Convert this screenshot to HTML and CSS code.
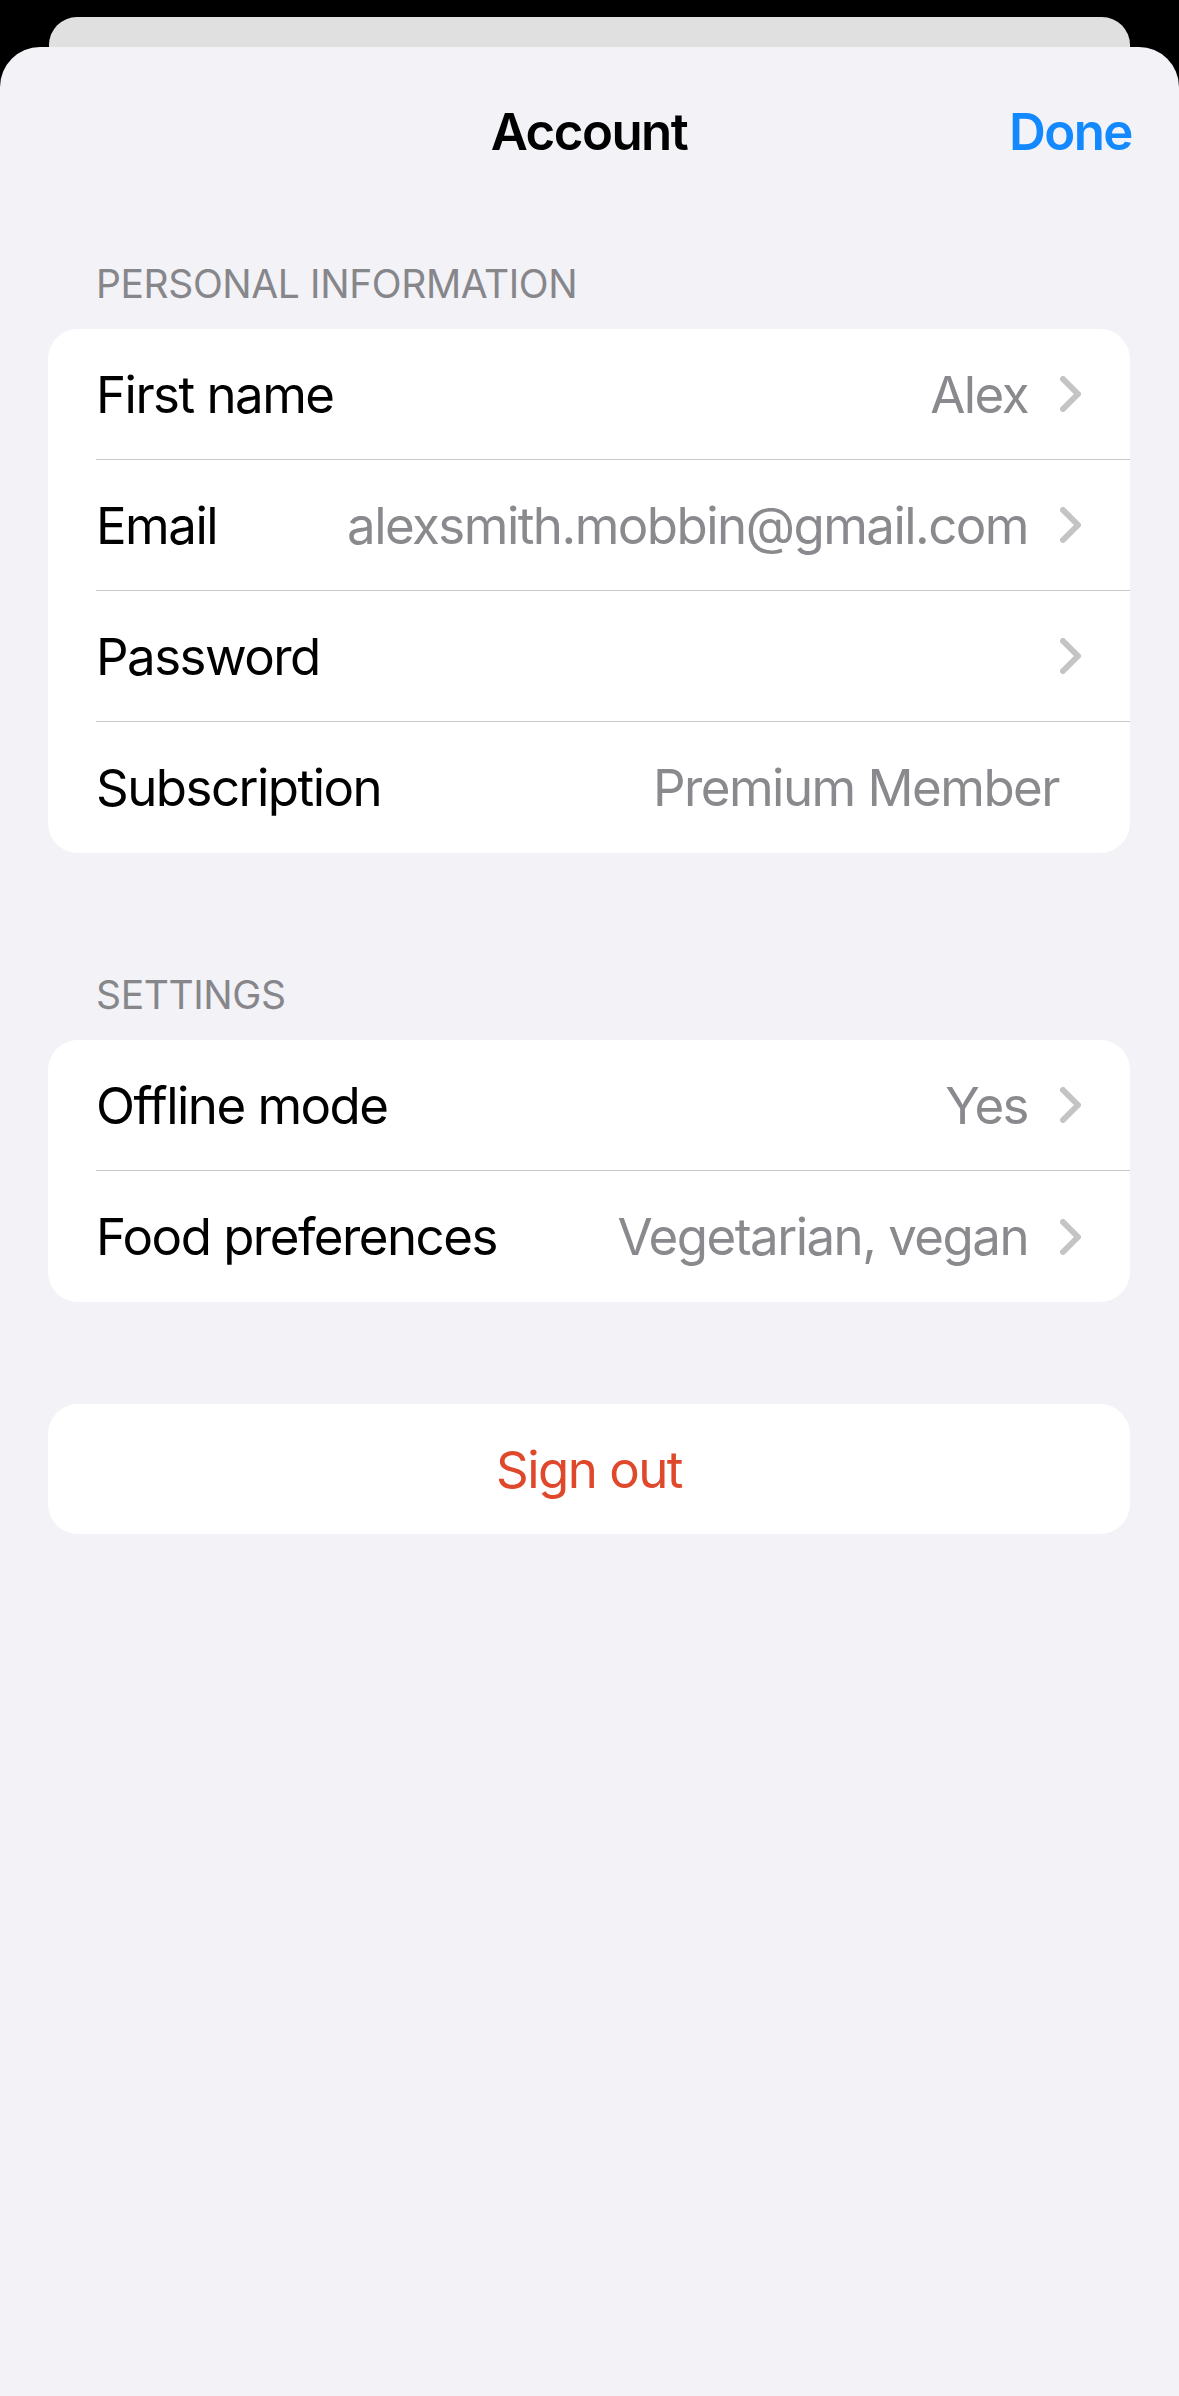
FILE: index.html
```html
<!DOCTYPE html>
<html lang="en">
<head>
  <meta charset="UTF-8">
  <meta name="viewport" content="width=device-width, initial-scale=1.0">
  <title>Account</title>
  <link rel="stylesheet" href="styles.css">
</head>
<body>
  <div class="backdrop">
    <div class="back-card"></div>
  </div>

  <div class="sheet">
    <div class="nav">
      <h1 class="nav-title">Account</h1>
      <button class="nav-done">Done</button>
    </div>

    <div class="section-header first">Personal information</div>
    <div class="card">
      <div class="row">
        <div class="row-body">
          <span class="label">First name</span>
          <span class="value">Alex</span>
          <svg class="chevron" viewBox="0 0 21 36"><path d="M3 3 L18 18 L3 33"/></svg>
        </div>
      </div>
      <div class="row">
        <div class="row-body">
          <span class="label">Email</span>
          <span class="value">alexsmith.mobbin@gmail.com</span>
          <svg class="chevron" viewBox="0 0 21 36"><path d="M3 3 L18 18 L3 33"/></svg>
        </div>
      </div>
      <div class="row">
        <div class="row-body">
          <span class="label">Password</span>
          <span class="value"></span>
          <svg class="chevron" viewBox="0 0 21 36"><path d="M3 3 L18 18 L3 33"/></svg>
        </div>
      </div>
      <div class="row">
        <div class="row-body">
          <span class="label">Subscription</span>
          <span class="value plain">Premium Member</span>
        </div>
      </div>
    </div>

    <div class="section-header">Settings</div>
    <div class="card">
      <div class="row">
        <div class="row-body">
          <span class="label">Offline mode</span>
          <span class="value">Yes</span>
          <svg class="chevron" viewBox="0 0 21 36"><path d="M3 3 L18 18 L3 33"/></svg>
        </div>
      </div>
      <div class="row">
        <div class="row-body">
          <span class="label">Food preferences</span>
          <span class="value">Vegetarian, vegan</span>
          <svg class="chevron" viewBox="0 0 21 36"><path d="M3 3 L18 18 L3 33"/></svg>
        </div>
      </div>
    </div>

    <div class="card sign-out">
      <button class="sign-out-btn">Sign out</button>
    </div>
  </div>
</body>
</html>
```

FILE: styles.css
```css
body {
  margin: 0;
  background: #000;
  font-family: 'Inter', 'Liberation Sans', sans-serif;
  -webkit-font-smoothing: antialiased;
}
.backdrop {
  padding-top: 17px;
  height: 30px;
}
.back-card {
  margin: 0 49px 0 49px;
  height: 30px;
  background: #e0e0e0;
  border-radius: 28px 28px 0 0;
}
.sheet {
  background: #f2f2f7;
  border-radius: 40px 40px 0 0;
  min-height: 2349px;
  padding: 0 49px 0 48px;
}
.nav {
  height: 168px;
  display: flex;
  align-items: center;
  justify-content: center;
  position: relative;
}
.nav-title {
  margin: 0;
  font-size: 51px;
  font-weight: 600;
  letter-spacing: -0.03em;
  color: #000;
}
.nav-done {
  position: absolute;
  right: -2px;
  top: 50%;
  transform: translateY(-50%);
  background: none;
  border: none;
  padding: 0;
  font-family: inherit;
  font-size: 51px;
  font-weight: 600;
  letter-spacing: -0.03em;
  color: #1289fe;
}
.section-header {
  padding: 118px 48px 22px;
  font-size: 39px;
  line-height: 47px;
  text-transform: uppercase;
  color: #86868b;
  letter-spacing: -0.01em;
}
.section-header.first {
  padding-top: 45px;
}
.card {
  background: #fff;
  border-radius: 30px;
  overflow: hidden;
}
.row {
  padding-left: 48px;
}
.row-body {
  display: flex;
  align-items: center;
  height: 130px;
  padding-right: 49px;
  border-bottom: 1px solid #c8c8cc;
  font-size: 51px;
  letter-spacing: -0.03em;
}
.row:last-child .row-body {
  border-bottom: none;
  height: 131px;
}
.label {
  flex: 1;
  color: #000;
}
.value {
  color: #8a8a8e;
  white-space: nowrap;
}
.value.plain {
  margin-right: 22px;
}
.chevron {
  width: 21px;
  height: 36px;
  margin-left: 32px;
  fill: none;
  stroke: #c4c4c6;
  stroke-width: 6;
  stroke-linecap: round;
  stroke-linejoin: round;
}
.sign-out {
  margin-top: 102px;
}
.sign-out-btn {
  display: block;
  width: 100%;
  height: 130px;
  background: none;
  border: none;
  font-family: inherit;
  font-size: 51px;
  letter-spacing: -0.03em;
  color: #e0482c;
  cursor: pointer;
}
```
